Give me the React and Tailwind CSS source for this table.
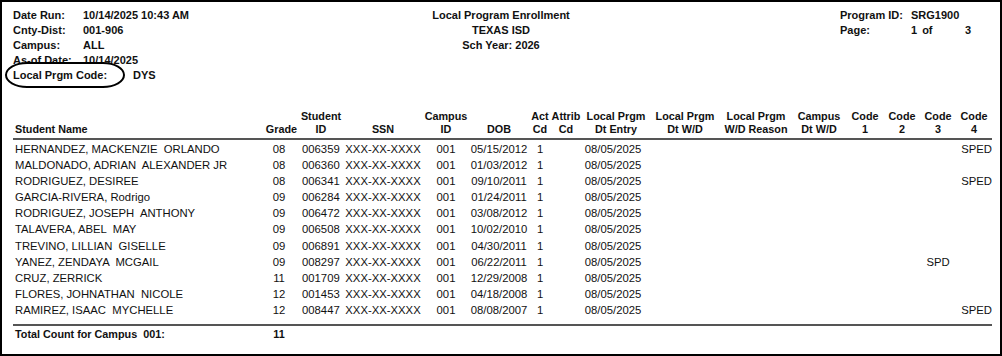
const cols = [245, 42, 42, 82, 44, 62, 20, 32, 68, 70, 72, 54, 38, 36, 36, 36];
const gridCols =
  'grid grid-cols-[245px_42px_42px_82px_44px_62px_20px_32px_68px_70px_72px_54px_38px_36px_36px_36px]';

const students = [
  ['HERNANDEZ, MACKENZIE  ORLANDO', '08', '006359', '05/15/2012', '', 'SPED'],
  ['MALDONADO, ADRIAN  ALEXANDER JR', '08', '006360', '01/03/2012', '', ''],
  ['RODRIGUEZ, DESIREE', '08', '006341', '09/10/2011', '', 'SPED'],
  ['GARCIA-RIVERA, Rodrigo', '09', '006284', '01/24/2011', '', ''],
  ['RODRIGUEZ, JOSEPH  ANTHONY', '09', '006472', '03/08/2012', '', ''],
  ['TALAVERA, ABEL  MAY', '09', '006508', '10/02/2010', '', ''],
  ['TREVINO, LILLIAN  GISELLE', '09', '006891', '04/30/2011', '', ''],
  ['YANEZ, ZENDAYA  MCGAIL', '09', '008297', '06/22/2011', 'SPD', ''],
  ['CRUZ, ZERRICK', '11', '001709', '12/29/2008', '', ''],
  ['FLORES, JOHNATHAN  NICOLE', '12', '001453', '04/18/2008', '', ''],
  ['RAMIREZ, ISAAC  MYCHELLE', '12', '008447', '08/08/2007', '', 'SPED'],
];

function HeaderCell({ top, bottom, align = 'text-center' }) {
  return (
    <div className={`flex flex-col justify-end ${align}`}>
      {top && <div>{top}</div>}
      <div>{bottom}</div>
    </div>
  );
}

export default function App() {
  return (
    <div className="relative w-[1002px] h-[356px] bg-white border-2 border-black font-['Liberation_Sans',Arial,sans-serif] text-[#111] overflow-hidden">
      {/* Report heading */}
      <div className="flex px-[11px] pt-[6px] text-[11px] font-bold leading-[15px]">
        <div className="w-[300px]">
          <div className="grid grid-cols-[70px_auto]">
            <span>Date Run:</span>
            <span>10/14/2025 10:43 AM</span>
            <span>Cnty-Dist:</span>
            <span>001-906</span>
            <span>Campus:</span>
            <span>ALL</span>
            <span>As-of Date:</span>
            <span>10/14/2025</span>
          </div>
          <div className="flex">
            <span className="w-[120px]">Local Prgm Code:</span>
            <span>DYS</span>
          </div>
        </div>
        <div className="flex-1 text-center">
          <div>Local Program Enrollment</div>
          <div>TEXAS ISD</div>
          <div>Sch Year: 2026</div>
        </div>
        <div className="w-[300px] pl-[151px]">
          <div className="flex">
            <span className="w-[71px]">Program ID:</span>
            <span>SRG1900</span>
          </div>
          <div className="flex">
            <span className="w-[71px]">Page:</span>
            <span className="flex w-[60px]">
              <span>1</span>
              <span className="ml-[5px]">of</span>
              <span className="ml-auto">3</span>
            </span>
          </div>
        </div>
      </div>

      {/* circled label */}
      <div className="absolute left-[3px] top-[60px] w-[120px] h-[26px] border-2 border-black rounded-[22px/50%]" />

      {/* Table */}
      <div className="ml-[11px] mt-[27px] w-[979px]">
        <div className={`${gridCols} text-[10.8px] font-bold leading-[12.5px] pb-[3px] border-b-2 border-[#555]`}>
          <HeaderCell bottom="Student Name" align="text-left pl-[2px]" />
          <HeaderCell bottom="Grade" align="text-right pr-[3px]" />
          <HeaderCell top="Student" bottom="ID" />
          <HeaderCell bottom="SSN" />
          <HeaderCell top="Campus" bottom="ID" />
          <HeaderCell bottom="DOB" />
          <HeaderCell top="Act" bottom="Cd" />
          <HeaderCell top="Attrib" bottom="Cd" />
          <HeaderCell top="Local Prgm" bottom="Dt Entry" />
          <HeaderCell top="Local Prgm" bottom="Dt W/D" />
          <HeaderCell top="Local Prgm" bottom="W/D Reason" />
          <HeaderCell top="Campus" bottom="Dt W/D" />
          <HeaderCell top="Code" bottom="1" />
          <HeaderCell top="Code" bottom="2" />
          <HeaderCell top="Code" bottom="3" />
          <HeaderCell top="Code" bottom="4" />
        </div>

        <div className="pt-[1px] text-[11.3px] leading-[16.1px]">
          {students.map(([name, grade, id, dob, code3, code4]) => (
            <div key={id} className={`${gridCols} h-[16.1px] whitespace-pre`}>
              <span className="pl-[2px]">{name}</span>
              <span className="text-center">{grade}</span>
              <span className="pl-[2px]">{id}</span>
              <span className="text-center">XXX-XX-XXXX</span>
              <span className="text-center">001</span>
              <span className="text-center">{dob}</span>
              <span className="pl-[7px]">1</span>
              <span />
              <span className="text-center pr-[6px]">08/05/2025</span>
              <span />
              <span />
              <span />
              <span />
              <span />
              <span className="text-center">{code3}</span>
              <span className="text-right">{code4}</span>
            </div>
          ))}
        </div>

        <div className={`${gridCols} mt-[6px] border-t-2 border-[#555] pt-[1px] text-[10.8px] font-bold leading-[14px] whitespace-pre`}>
          <span className="pl-[2px]">Total Count for Campus  001:</span>
          <span className="text-center">11</span>
        </div>
      </div>
    </div>
  );
}
